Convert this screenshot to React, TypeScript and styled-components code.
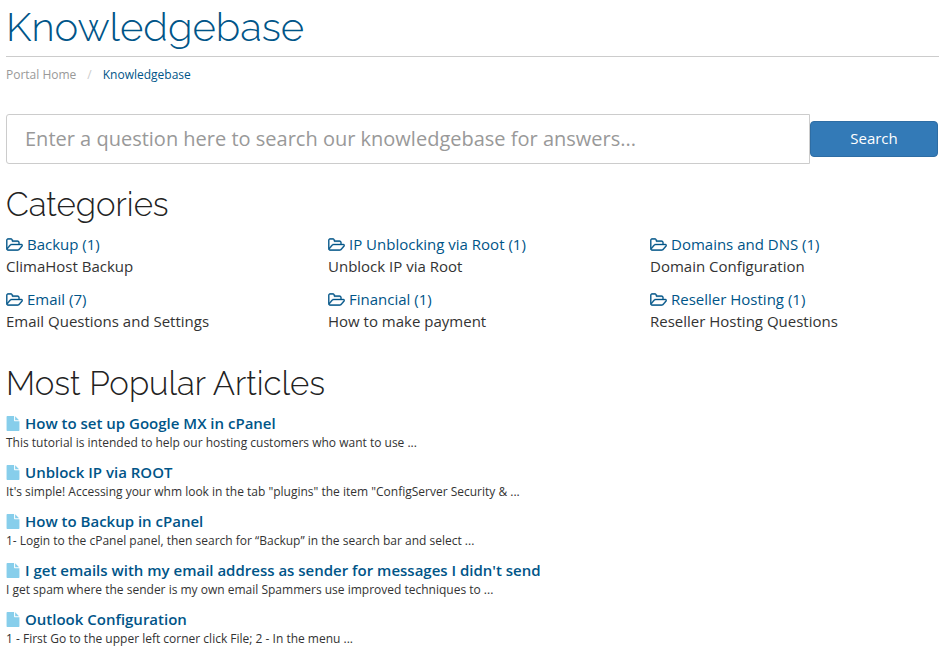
import React from 'react';
import styled, { createGlobalStyle } from 'styled-components';

const GlobalStyle = createGlobalStyle`
  *, *::before, *::after { box-sizing: border-box; }
  body {
    margin: 0;
    background: #fff;
    color: #333;
    font-family: "Open Sans", Verdana, sans-serif;
    font-size: 15px;
    line-height: 22px;
  }
`;

const Page = styled.main`
  padding: 6px 6px 0;
`;

const Header = styled.header`
  border-bottom: 1px solid #ccc;
  padding-bottom: 9px;
`;

const Title = styled.h1`
  margin: 0;
  color: #058;
  font-family: Raleway, Lato, "Open Sans", sans-serif;
  font-size: 40px;
  font-weight: 300;
  line-height: 41px;
`;

const Heading = styled.h2`
  margin: 0 0 9px;
  color: #222;
  font-family: Raleway, Lato, "Open Sans", sans-serif;
  font-size: 33px;
  font-weight: 300;
  line-height: 38px;
`;

const Breadcrumb = styled.nav`
  display: flex;
  gap: 11px;
  padding: 9px 0;
  font-size: 12px;
  line-height: 18px;
`;

const Crumb = styled.a`
  color: #999;
  text-decoration: none;
  &[aria-current] { color: #058; }
`;

const Separator = styled.span`
  color: #ccc;
`;

const SearchForm = styled.form`
  display: flex;
  align-items: center;
  margin: 21px 0 22px;
  padding-right: 1px;
`;

const SearchInput = styled.input`
  flex: 1;
  min-width: 0;
  height: 50px;
  padding: 0 18px 2px;
  border: 1px solid #ccc;
  border-radius: 3px 0 0 3px;
  font: 20px/26px "Open Sans", sans-serif;
  color: #555;
  &::placeholder { color: #999; opacity: 1; }
`;

const SearchButton = styled.button`
  width: 128px;
  height: 36px;
  padding: 0 0 2px;
  border: 1px solid #2e6da4;
  border-radius: 4px;
  background: #337ab7;
  color: #fff;
  font: 15px/22px "Open Sans", sans-serif;
`;

const Categories = styled.div`
  display: grid;
  grid-template-columns: repeat(3, 1fr);
  column-gap: 33px;
  row-gap: 11px;
  margin-bottom: 33px;
`;

const CategoryLink = styled.a`
  display: flex;
  align-items: center;
  gap: 4px;
  color: #058;
  text-decoration: none;
`;

const Text = styled.p`
  margin: 0;
`;

const Article = styled.article`
  margin-bottom: 9px;
`;

const ArticleLink = styled.a`
  display: flex;
  align-items: center;
  gap: 5px;
  color: #058;
  font-weight: 600;
  text-decoration: none;
`;

const FolderSvg = styled.svg`
  width: 17px;
  height: 13px;
  fill: currentColor;
  stroke: currentColor;
  stroke-width: 40;
`;

const FileSvg = styled.svg`
  width: 14px;
  height: 15px;
  fill: #87ceeb;
`;

const Excerpt = styled.p`
  margin: 0;
  font-size: 12px;
  line-height: 18px;
`;

const FolderIcon = () => (
  <FolderSvg viewBox="-20 -20 1949 1448" aria-hidden="true">
    <path d="M1781 803q0-35-53-35h-1088q-40 0-85.500 21.500t-71.500 52.500l-294 363q-18 24-18 40 0 35 53 35h1088q40 0 86-22t71-53l294-363q18-22 18-39zm-1141-163h768v-160q0-40-28-68t-68-28h-576q-40 0-68-28t-28-68v-64q0-40-28-68t-68-28h-320q-40 0-68 28t-28 68v853l256-315q44-53 116-87.500t140-34.500zm1269 163q0 62-46 120l-295 363q-43 53-116 87.500t-140 34.500h-1088q-92 0-158-66t-66-158v-960q0-92 66-158t158-66h320q92 0 158 66t66 158v32h544q92 0 158 66t66 158v160h192q54 0 99 24.500t67 70.500q15 32 15 68z" />
  </FolderSvg>
);

const FileIcon = () => (
  <FileSvg viewBox="60 0 1672 1792" aria-hidden="true">
    <path d="M1152 512v-472q22 14 36 28l408 408q14 14 28 36h-472zm-128 32q0 40 28 68t68 28h544v1056q0 40-28 68t-68 28h-1344q-40 0-68-28t-28-68v-1600q0-40 28-68t68-28h800v544z" />
  </FileSvg>
);

const categories = [
  ['Backup (1)', 'ClimaHost Backup'],
  ['IP Unblocking via Root (1)', 'Unblock IP via Root'],
  ['Domains and DNS (1)', 'Domain Configuration'],
  ['Email (7)', 'Email Questions and Settings'],
  ['Financial (1)', 'How to make payment'],
  ['Reseller Hosting (1)', 'Reseller Hosting Questions'],
];

const articles = [
  ['How to set up Google MX in cPanel', 'This tutorial is intended to help our hosting customers who want to use ...'],
  ['Unblock IP via ROOT', 'It\'s simple! Accessing your whm look in the tab "plugins" the item "ConfigServer Security & ...'],
  ['How to Backup in cPanel', '1- Login to the cPanel panel, then search for “Backup” in the search bar and select ...'],
  ["I get emails with my email address as sender for messages I didn't send", 'I get spam where the sender is my own email Spammers use improved techniques to ...'],
  ['Outlook Configuration', '1 - First Go to the upper left corner click File; 2 - In the menu ...'],
];

export default function App() {
  return (
    <Page>
      <GlobalStyle />
      <Header><Title>Knowledgebase</Title></Header>
      <Breadcrumb aria-label="Breadcrumb">
        <Crumb href="#">Portal Home</Crumb>
        <Separator>/</Separator>
        <Crumb href="#" aria-current="page">Knowledgebase</Crumb>
      </Breadcrumb>
      <SearchForm role="search">
        <SearchInput aria-label="Search the knowledgebase" placeholder="Enter a question here to search our knowledgebase for answers..." />
        <SearchButton type="button">Search</SearchButton>
      </SearchForm>
      <Heading>Categories</Heading>
      <Categories>
        {categories.map(([name, description]) => (
          <div key={name}>
            <CategoryLink href="#"><FolderIcon />{name}</CategoryLink>
            <Text>{description}</Text>
          </div>
        ))}
      </Categories>
      <Heading>Most Popular Articles</Heading>
      {articles.map(([title, excerpt]) => (
        <Article key={title}>
          <ArticleLink href="#"><FileIcon />{title}</ArticleLink>
          <Excerpt>{excerpt}</Excerpt>
        </Article>
      ))}
    </Page>
  );
}
